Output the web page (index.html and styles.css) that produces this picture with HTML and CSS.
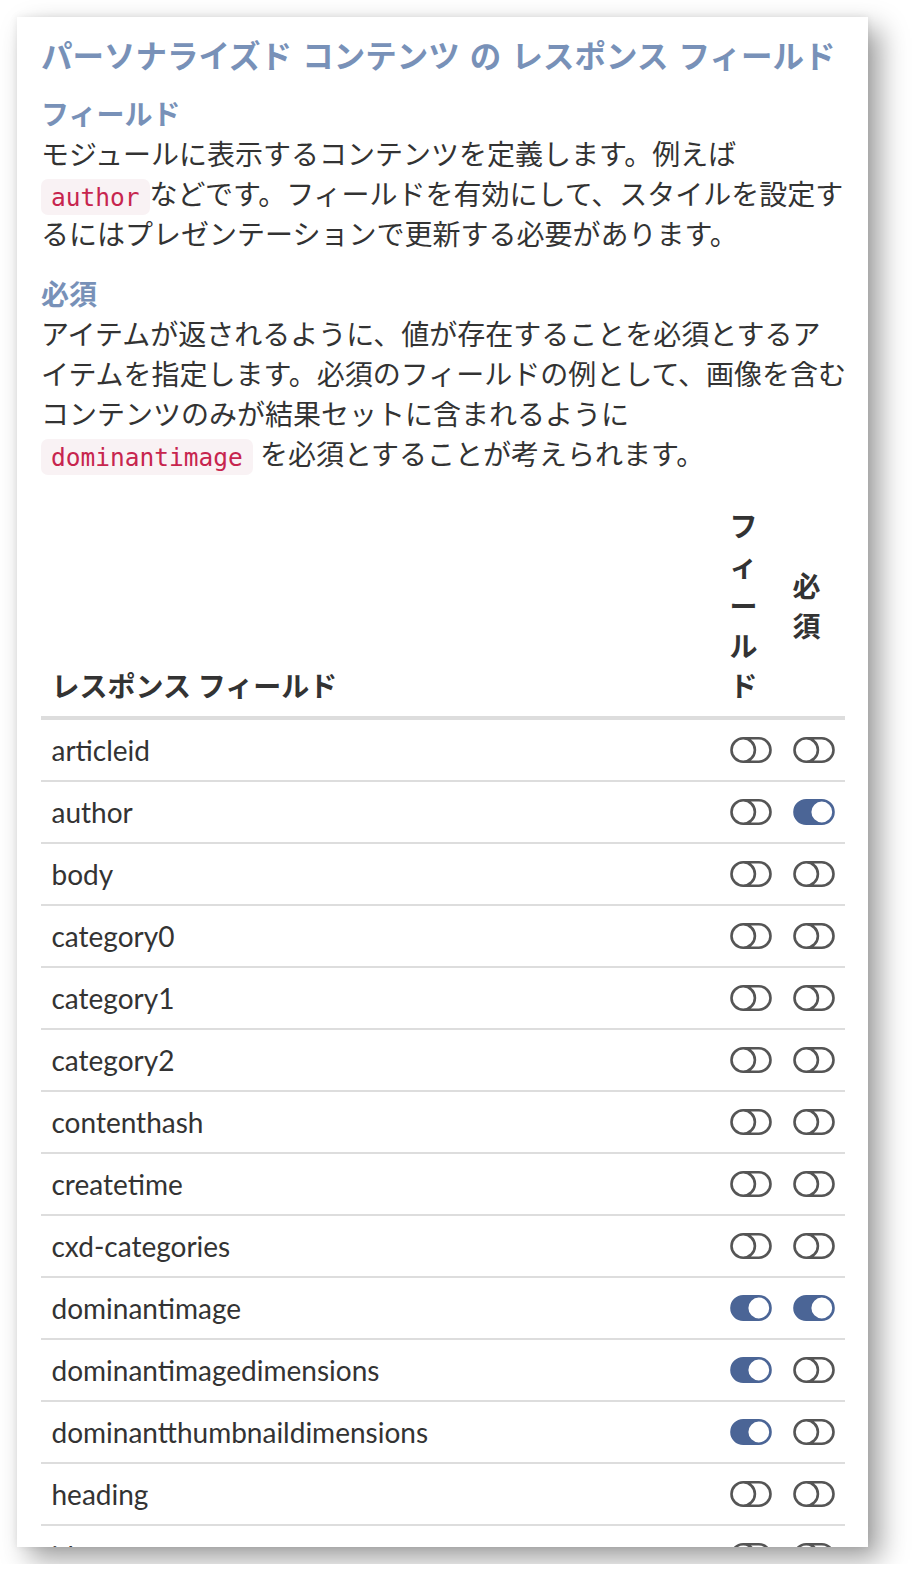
FILE: index.html
```html
<!DOCTYPE html>
<html lang="ja">
<head>
  <meta charset="UTF-8">
  <meta name="viewport" content="width=device-width, initial-scale=1.0">
  <title>レスポンス フィールド</title>
  <link rel="stylesheet" href="styles.css">
</head>
<body>
  <svg class="icon-defs" xmlns="http://www.w3.org/2000/svg">
    <symbol id="toggle-off" viewBox="0 3 16 10">
      <path d="M11 4a4 4 0 0 1 0 8H8a5 5 0 0 0 2-4 5 5 0 0 0-2-4zm-6 8a4 4 0 1 1 0-8 4 4 0 0 1 0 8M0 8a5 5 0 0 0 5 5h6a5 5 0 0 0 0-10H5a5 5 0 0 0-5 5"/>
    </symbol>
    <symbol id="toggle-on" viewBox="0 3 16 10">
      <path d="M5 3a5 5 0 0 0 0 10h6a5 5 0 0 0 0-10zm6 9a4 4 0 1 1 0-8 4 4 0 0 1 0 8"/>
    </symbol>
  </svg>

  <div class="panel">
    <h1 class="panel-title">パーソナライズド コンテンツ の レスポンス フィールド</h1>

    <dl class="help">
      <dt>フィールド</dt>
      <dd>モジュールに表示するコンテンツを定義します。例えば<br><code>author</code>などです。フィールドを有効にして、スタイルを設定す<br>るにはプレゼンテーションで更新する必要があります。</dd>
      <dt>必須</dt>
      <dd>アイテムが返されるように、値が存在することを必須とするア<br>イテムを指定します。必須のフィールドの例として、画像を含む<br>コンテンツのみが結果セットに含まれるように<br><code>dominantimage</code> を必須とすることが考えられます。</dd>
    </dl>

    <table class="fields">
      <thead>
        <tr>
          <th class="name">レスポンス フィールド</th>
          <th class="flag">フィールド</th>
          <th class="flag flag-mid">必須</th>
        </tr>
      </thead>
      <tbody id="field-rows"></tbody>
    </table>
  </div>

  <script>
    // [name, field enabled, required]
    const fields = [
      ['articleid', false, false],
      ['author', false, true],
      ['body', false, false],
      ['category0', false, false],
      ['category1', false, false],
      ['category2', false, false],
      ['contenthash', false, false],
      ['createtime', false, false],
      ['cxd-categories', false, false],
      ['dominantimage', true, true],
      ['dominantimagedimensions', true, false],
      ['dominantthumbnaildimensions', true, false],
      ['heading', false, false],
      ['id', false, false],
      ['image', false, false],
      ['language', false, false]
    ];

    function toggleIcon(on) {
      const state = on ? 'on' : 'off';
      return '<svg class="toggle toggle-' + state + '"><use href="#toggle-' + state + '"></use></svg>';
    }

    const tbody = document.getElementById('field-rows');
    fields.forEach(function (f) {
      const tr = document.createElement('tr');
      tr.innerHTML =
        '<td class="name">' + f[0] + '</td>' +
        '<td class="flag">' + toggleIcon(f[1]) + '</td>' +
        '<td class="flag">' + toggleIcon(f[2]) + '</td>';
      tbody.appendChild(tr);
    });
  </script>
</body>
</html>
```

FILE: styles.css
```css
body {
  margin: 0;
  padding: 17px;
  background: #fff;
  font-family: "Lato", "Noto Sans CJK JP", sans-serif;
  color: #333;
}

.icon-defs {
  display: none;
}

.panel {
  width: 851px;
  height: 1530px;
  box-sizing: border-box;
  padding: 22px 23px 0 24px;
  background: #fff;
  overflow: hidden;
  box-shadow: 12px 12px 26px rgba(0, 0, 0, 0.38), 0 0 8px rgba(0, 0, 0, 0.08);
}

.panel-title {
  margin: 0 0 20px;
  font-size: 31.5px;
  line-height: 35px;
  font-weight: 700;
  color: #7891b8;
  word-spacing: 2.5px;
}

.help {
  margin: 0;
  font-size: 28px;
  line-height: 40px;
}

.help dt {
  font-weight: 700;
  color: #7891b8;
}

.help dd {
  margin: 0 0 20px;
  white-space: nowrap;
}

code {
  font-family: "DejaVu Sans Mono", monospace;
  font-size: 24.5px;
  line-height: 1;
  color: #c7254e;
  background: #f9f2f4;
  padding: 3.5px 10px;
  border-radius: 7px;
}

.fields {
  width: 100%;
  border-collapse: collapse;
  font-size: 28px;
  line-height: 40px;
}

.fields th {
  padding: 12px 10.5px 10px;
  text-align: left;
  font-weight: 700;
  vertical-align: bottom;
  border-bottom: 4px solid #ddd;
}

.fields th.flag {
  width: 1px;
  line-break: anywhere;
}

.fields th.flag-mid {
  vertical-align: middle;
}

.fields td {
  padding: 13px 10.5px;
  line-height: 34px;
  border-top: 2px solid #ddd;
  vertical-align: middle;
}

.fields td.flag {
  width: 1px;
}

.toggle {
  display: block;
  width: 42px;
  height: 26px;
  fill: currentColor;
}

.toggle-off {
  color: #555;
}

.toggle-on {
  color: #4b6596;
}
```
